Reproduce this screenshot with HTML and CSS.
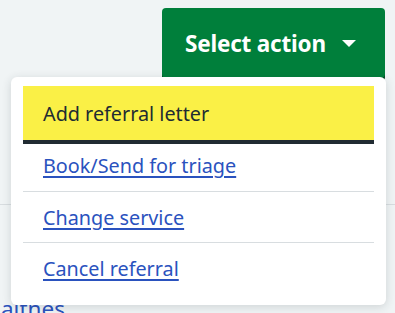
FILE: index.html
```html
<!DOCTYPE html>
<html lang="en">
<head>
<meta charset="utf-8">
<link rel="stylesheet" href="styles.css">
</head>
<body>
<div class="page">
  <div class="toolbar">
    <div class="action-wrap">
      <button class="action-btn" type="button">
        <span>Select action</span>
        <svg class="caret" width="16" height="8" viewBox="0 0 16 8" aria-hidden="true"><path d="M1 0 H15 L8 7 Z" fill="#ffffff"/></svg>
      </button>
    </div>
  </div>
  <div class="bg-content">
    <div class="bg-row"></div>
    <div class="bg-text">aitnes</div>
  </div>
  <ul class="menu">
    <li class="menu-item focused"><a href="#">Add referral letter</a></li>
    <li class="menu-item"><a href="#">Book/Send for triage</a></li>
    <li class="menu-item"><a href="#">Change service</a></li>
    <li class="menu-item last"><a href="#">Cancel referral</a></li>
  </ul>
</div>
</body>
</html>
```
FILE: styles.css
```css
html, body {
  margin: 0;
  padding: 0;
}
body {
  background: #f0f4f5;
  font-family: "Noto Sans", "Open Sans", sans-serif;
  width: 395px;
  height: 313px;
  overflow: hidden;
}
.page {
  position: relative;
  width: 395px;
  height: 313px;
}
.toolbar {
  display: flex;
  justify-content: flex-end;
  padding: 8px 10px 0 0;
}
.action-btn {
  display: flex;
  align-items: center;
  gap: 15px;
  width: 223px;
  height: 70px;
  padding: 0 0 0 23px;
  background: #007f3b;
  border: none;
  border-radius: 4px;
  color: #ffffff;
  font-family: "Noto Sans", "Open Sans", sans-serif;
  font-weight: 700;
  font-size: 22.5px;
  letter-spacing: -0.2px;
  box-sizing: border-box;
  box-shadow: 0 3px 0 #00401e;
}
.caret {
  display: block;
  margin-top: 2px;
}
.bg-content {
  padding-top: 126px;
}
.bg-row {
  border-top: 1px solid #d8dde0;
  height: 91px;
}
.bg-text {
  color: #2a52be;
  font-size: 22.5px;
  line-height: 26px;
  padding-left: 1px;
}
.menu {
  position: absolute;
  left: 11px;
  top: 77px;
  width: 375px;
  margin: 0;
  padding: 9px 12px 12px;
  box-sizing: border-box;
  list-style: none;
  background: #ffffff;
  border-radius: 6px;
  box-shadow: 0 2px 10px rgba(33, 43, 50, 0.16);
}
.menu-item {
  display: flex;
  align-items: center;
  height: 50px;
  padding: 0 20px;
  border-bottom: 1px solid #d8dde0;
  font-size: 19.8px;
}
.menu-item.last {
  border-bottom: none;
}
.menu-item a {
  color: #2a52be;
  text-decoration: underline;
  text-underline-offset: 3px;
  text-decoration-thickness: 2px;
}
.menu-item.focused {
  height: 54px;
  background: #faf046;
  border-bottom: none;
  box-shadow: 0 4px 0 #212b32;
  position: relative;
}
.menu-item.focused a {
  color: #212b32;
  text-decoration: none;
}
.menu-item.focused + .menu-item {
  height: 51px;
}
```
